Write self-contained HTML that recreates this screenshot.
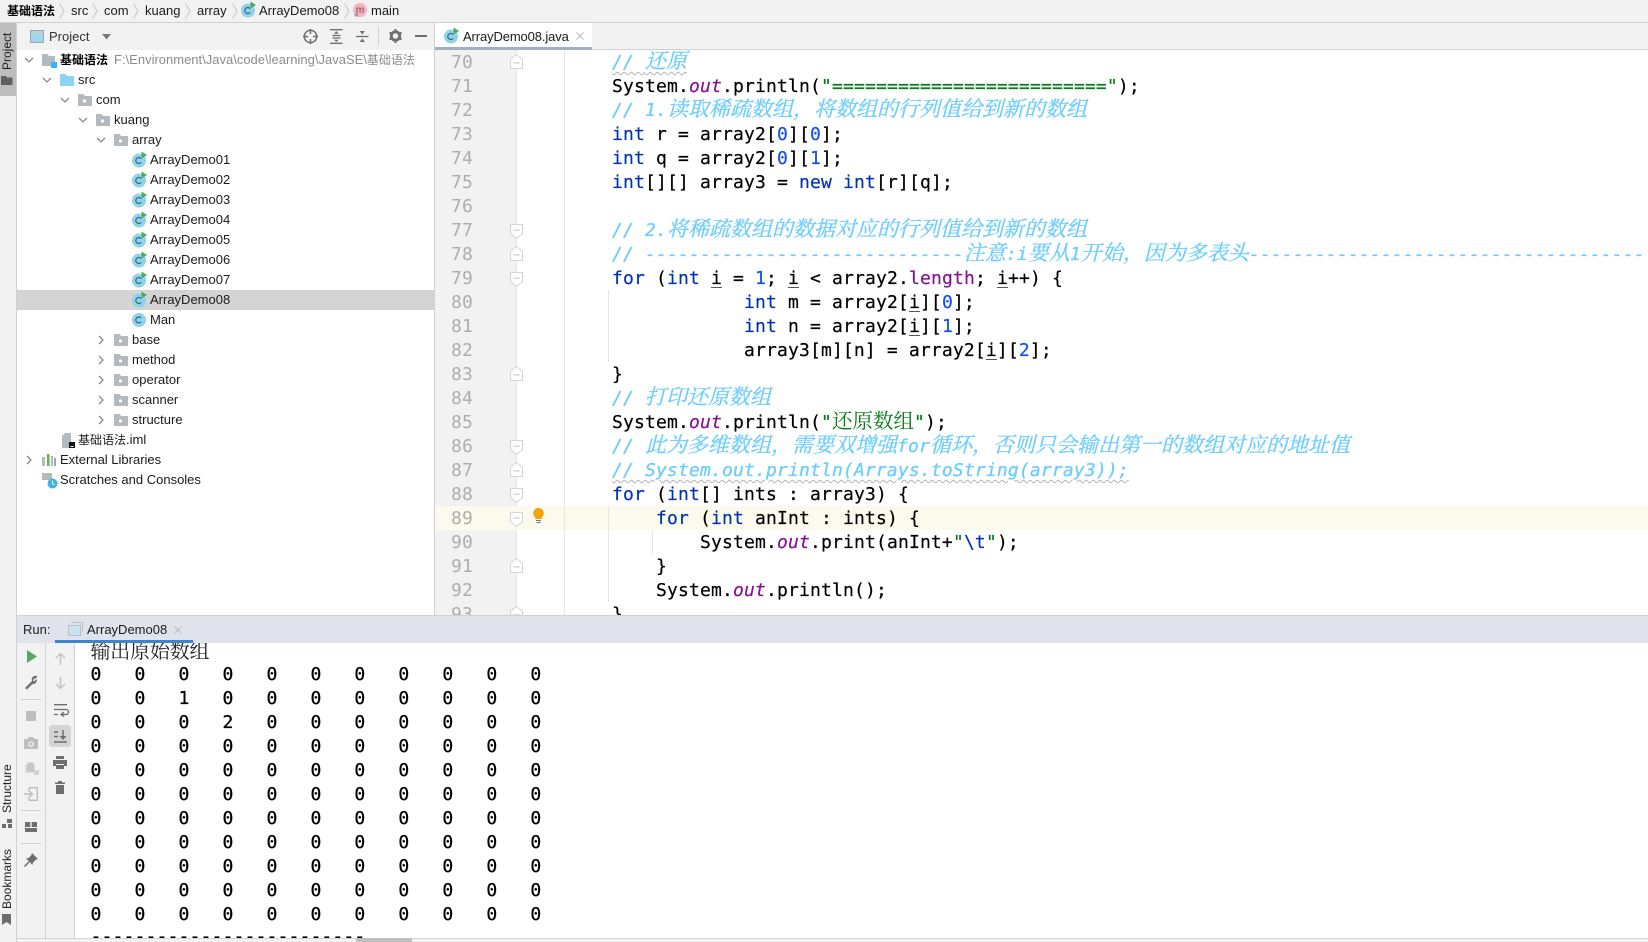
<!DOCTYPE html>
<html><head><meta charset="utf-8"><style>
*{box-sizing:border-box}
html,body{margin:0;padding:0;width:1648px;height:942px;overflow:hidden;background:#fff}
body{position:relative;font-family:"Liberation Sans","Noto Sans CJK SC",sans-serif;font-size:13px;color:#1a1a1a}
.a{position:absolute}
.t{position:absolute;white-space:pre;line-height:20px;height:20px}
.l{position:absolute;left:612px;height:24px;line-height:24px;white-space:pre;font-family:"DejaVu Sans Mono",monospace;font-size:18px;letter-spacing:.16px;color:#000;transform:translateY(1px);-webkit-text-stroke:.2px}
.n{position:absolute;left:449px;width:24px;height:24px;line-height:24px;text-align:right;font-family:"DejaVu Sans Mono",monospace;font-size:18px;letter-spacing:.16px;color:#adadad;transform:translateY(1px)}
.k{color:#0033b3}.d{color:#1750eb}.s{color:#067d17}.f{color:#871094;font-style:italic}.m{color:#871094}
.c{color:#6ccdff;font-style:italic;-webkit-text-stroke:.3px}
.z{font-family:"Noto Serif CJK SC",serif;font-size:21px;letter-spacing:0;line-height:0}
.u{text-decoration:underline;text-decoration-color:#555;text-underline-offset:3px}
.w{text-decoration:underline wavy #b5b5b5 1px;text-underline-offset:3px}
.g{position:absolute;width:1px;background:#e6e6e6}
.o{position:absolute;left:15.5px;height:24px;line-height:24px;white-space:pre;font-family:"DejaVu Sans Mono",monospace;font-size:18px;letter-spacing:.16px;color:#000;transform:translateY(1px);-webkit-text-stroke:.3px}
.v{position:absolute;white-space:pre;transform:rotate(-90deg);transform-origin:0 0;font-size:12px;color:#222;line-height:16px}
svg{position:absolute;overflow:visible}
</style></head><body>
<svg width="0" height="0" style="position:absolute"><defs>
<symbol id="cr" viewBox="0 0 14 14" overflow="visible"><circle cx="7" cy="7.5" r="7" fill="#8fd3ec"/><path d="M9.2 5.7A3 3 0 1 0 9.2 9.3" fill="none" stroke="#39667a" stroke-width="1.2"/><path d="M9.5-1.5L15 2 9.5 5.5z" fill="#4bab4f"/></symbol>
<symbol id="cn" viewBox="0 0 14 14" overflow="visible"><circle cx="7" cy="7" r="7" fill="#8fd3ec"/><path d="M9.2 5.2A3 3 0 1 0 9.2 8.8" fill="none" stroke="#39667a" stroke-width="1.2"/></symbol>
<symbol id="pk" viewBox="0 0 14 12" overflow="visible"><path d="M0 0h5.500l1.500 2h7v10H0z" fill="#b2bac0"/><circle cx="6.500" cy="7" r="1.600" fill="#fff"/></symbol>
<symbol id="dn" viewBox="0 0 10 6" overflow="visible"><path d="M1 1l4 4 4-4" fill="none" stroke="#8b8b8b" stroke-width="1.300"/></symbol>
<symbol id="rt" viewBox="0 0 6 10" overflow="visible"><path d="M1 1l4 4-4 4" fill="none" stroke="#8b8b8b" stroke-width="1.300"/></symbol>
<symbol id="sp" viewBox="0 0 6 16" overflow="visible"><path d="M.5 .5L5 8 .5 15.500" fill="none" stroke="#c4c4c4" stroke-width="1"/></symbol>
<symbol id="fu" viewBox="0 0 14 16" overflow="visible"><path d="M.5 5.500L7 .5l6.500 5v10H.5z" fill="#fff" stroke="#d0d0d0"/><path d="M3.500 9.500h7" stroke="#bdbdbd"/></symbol>
<symbol id="fd" viewBox="0 0 14 16" overflow="visible"><path d="M.5 .5h13v10L7 15.500.5 10.500z" fill="#fff" stroke="#d0d0d0"/><path d="M3.500 6.500h7" stroke="#bdbdbd"/></symbol>
</defs></svg>

<!-- breadcrumb -->
<div class="a" style="left:0;top:0;width:1648px;height:23px;background:#f2f2f2;border-bottom:1px solid #d1d1d1"></div>
<div class="t" style="left:7px;top:1px;font-size:12px;font-weight:bold;color:#000">基础语法</div>
<svg style="left:59px;top:3px" width="6" height="16"><use href="#sp" width="6" height="16"/></svg>
<div class="t" style="left:71px;top:1px">src</div>
<svg style="left:92px;top:3px" width="6" height="16"><use href="#sp" width="6" height="16"/></svg>
<div class="t" style="left:104px;top:1px">com</div>
<svg style="left:133px;top:3px" width="6" height="16"><use href="#sp" width="6" height="16"/></svg>
<div class="t" style="left:145px;top:1px">kuang</div>
<svg style="left:185px;top:3px" width="6" height="16"><use href="#sp" width="6" height="16"/></svg>
<div class="t" style="left:197px;top:1px">array</div>
<svg style="left:232px;top:3px" width="6" height="16"><use href="#sp" width="6" height="16"/></svg>
<svg style="left:241px;top:3px" width="14" height="14"><use href="#cr" width="14" height="14"/></svg>
<div class="t" style="left:259px;top:1px">ArrayDemo08</div>
<svg style="left:344px;top:3px" width="6" height="16"><use href="#sp" width="6" height="16"/></svg>
<svg style="left:353px;top:3px" width="14" height="15"><circle cx="7" cy="7" r="7" fill="#f7b3c2"/><text x="7" y="10" font-size="10" text-anchor="middle" fill="#7a3a4a" font-family="Liberation Sans">m</text><path d="M1 12l3-2.500 2 2-3 2.500z" fill="#9aa0a6"/></svg>
<div class="t" style="left:371px;top:1px">main</div>

<!-- left bar -->
<div class="a" style="left:0;top:23px;width:17px;height:919px;background:#f2f2f2;border-right:1px solid #d1d1d1"></div>
<div class="a" style="left:0;top:23px;width:16px;height:73px;background:#bdbdbd"></div>
<div class="v" style="left:-1px;top:70px">Project</div>
<svg style="left:1px;top:76px" width="12" height="9"><path d="M0 0h5l1 1.500h5.500V9H0z" fill="#5f5f5f"/></svg>
<div class="v" style="left:-1px;top:813px">Structure</div>
<svg style="left:2px;top:819px" width="11" height="9"><path d="M5 0h5v4H5zM0 5h4v4H0zM6 5h4v4H6z" fill="#6e6e6e"/></svg>
<div class="v" style="left:-1px;top:909px">Bookmarks</div>
<svg style="left:2px;top:914px" width="10" height="12"><path d="M0 0h9v11L4.500 8 0 11z" fill="#6e6e6e"/></svg>

<!-- project panel -->
<div class="a" style="left:17px;top:23px;width:418px;height:592px;background:#fff;border-right:1px solid #d1d1d1"></div>
<div class="a" style="left:17px;top:23px;width:417px;height:27px;background:#f2f2f2"></div>
<svg style="left:30px;top:30px" width="14" height="13"><rect x=".5" y=".5" width="13" height="12" fill="#9fd7f0" stroke="#9aa7b0"/><rect x="1" y="1" width="12" height="2.500" fill="#c9ced2"/></svg>
<div class="t" style="left:49px;top:27px;color:#333">Project</div>
<svg style="left:102px;top:34px" width="9" height="6"><path d="M0 0h9L4.500 5.500z" fill="#777"/></svg>
<svg style="left:303px;top:29px" width="15" height="15"><circle cx="7.500" cy="7.500" r="6.200" fill="none" stroke="#6e6e6e" stroke-width="1.500"/><path d="M7.500 0v5M7.500 10v5M0 7.500h5M10 7.500h5" stroke="#6e6e6e" stroke-width="1.500"/></svg>
<svg style="left:330px;top:29px" width="13" height="15"><path d="M0 .7h12.500M0 14.300h12.500M2.500 6.500h8M2.500 9h8" stroke="#6e6e6e" stroke-width="1.300" /><path d="M6.300 2L4 4.800h4.600z" fill="#6e6e6e"/><path d="M6.300 13L4 10.700h4.600z" fill="#6e6e6e"/></svg>
<svg style="left:356px;top:29px" width="13" height="15"><path d="M0 7.500h12.500" stroke="#6e6e6e" stroke-width="1.300"/><path d="M6.300 5.500L3.700 2h5.200zM6.300 9.500L3.700 13h5.200z" fill="#6e6e6e"/></svg>
<div class="a" style="left:378px;top:26px;width:1px;height:20px;background:#d1d1d1"></div>
<svg style="left:389px;top:29px" width="13" height="14"><circle cx="6.500" cy="7" r="4.200" fill="none" stroke="#6e6e6e" stroke-width="2.800"/><path d="M6.500 0v3M6.500 11v3M.5 3.500l2.600 1.500M9.900 9l2.600 1.500M.5 10.500L3.100 9M9.900 5l2.600-1.500" stroke="#6e6e6e" stroke-width="2"/></svg>
<div class="a" style="left:415px;top:35px;width:12px;height:2px;background:#6e6e6e"></div>

<!-- tree -->
<div class="a" style="left:17px;top:290px;width:417px;height:20px;background:#d4d4d4"></div>
<svg style="left:24px;top:57px" width="10" height="6"><use href="#dn" width="10" height="6"/></svg>
<svg style="left:42px;top:54px" width="15" height="14"><path d="M0 0h5.500l1.500 2h6v10H0z" fill="#b2bac0"/><rect x="9" y="8" width="6" height="6" fill="#3fb3e3"/></svg>
<div class="t" style="left:60px;top:50px;font-size:12px;font-weight:bold;color:#000">基础语法</div>
<div class="t" style="left:114px;top:50px;color:#8c8c8c">F:\Environment\Java\code\learning\JavaSE\<span style="font-size:12px">基础语法</span></div>
<svg style="left:42px;top:77px" width="10" height="6"><use href="#dn" width="10" height="6"/></svg>
<svg style="left:60px;top:74px" width="14" height="12"><path d="M0 0h5.500l1.500 2h7v10H0z" fill="#8cd3ef"/></svg>
<div class="t" style="left:78px;top:70px">src</div>
<svg style="left:60px;top:97px" width="10" height="6"><use href="#dn" width="10" height="6"/></svg>
<svg style="left:78px;top:94px" width="14" height="12"><use href="#pk" width="14" height="12"/></svg>
<div class="t" style="left:96px;top:90px">com</div>
<svg style="left:78px;top:117px" width="10" height="6"><use href="#dn" width="10" height="6"/></svg>
<svg style="left:96px;top:114px" width="14" height="12"><use href="#pk" width="14" height="12"/></svg>
<div class="t" style="left:114px;top:110px">kuang</div>
<svg style="left:96px;top:137px" width="10" height="6"><use href="#dn" width="10" height="6"/></svg>
<svg style="left:114px;top:134px" width="14" height="12"><use href="#pk" width="14" height="12"/></svg>
<div class="t" style="left:132px;top:130px">array</div>
<svg style="left:132px;top:153px" width="14" height="14"><use href="#cr" width="14" height="14"/></svg><div class="t" style="left:150px;top:150px">ArrayDemo01</div>
<svg style="left:132px;top:173px" width="14" height="14"><use href="#cr" width="14" height="14"/></svg><div class="t" style="left:150px;top:170px">ArrayDemo02</div>
<svg style="left:132px;top:193px" width="14" height="14"><use href="#cr" width="14" height="14"/></svg><div class="t" style="left:150px;top:190px">ArrayDemo03</div>
<svg style="left:132px;top:213px" width="14" height="14"><use href="#cr" width="14" height="14"/></svg><div class="t" style="left:150px;top:210px">ArrayDemo04</div>
<svg style="left:132px;top:233px" width="14" height="14"><use href="#cr" width="14" height="14"/></svg><div class="t" style="left:150px;top:230px">ArrayDemo05</div>
<svg style="left:132px;top:253px" width="14" height="14"><use href="#cr" width="14" height="14"/></svg><div class="t" style="left:150px;top:250px">ArrayDemo06</div>
<svg style="left:132px;top:273px" width="14" height="14"><use href="#cr" width="14" height="14"/></svg><div class="t" style="left:150px;top:270px">ArrayDemo07</div>
<svg style="left:132px;top:293px" width="14" height="14"><use href="#cr" width="14" height="14"/></svg><div class="t" style="left:150px;top:290px">ArrayDemo08</div>
<svg style="left:132px;top:313px" width="14" height="14"><use href="#cn" width="14" height="14"/></svg><div class="t" style="left:150px;top:310px">Man</div>
<svg style="left:98px;top:335px" width="6" height="10"><use href="#rt" width="6" height="10"/></svg><svg style="left:114px;top:334px" width="14" height="12"><use href="#pk" width="14" height="12"/></svg><div class="t" style="left:132px;top:330px">base</div>
<svg style="left:98px;top:355px" width="6" height="10"><use href="#rt" width="6" height="10"/></svg><svg style="left:114px;top:354px" width="14" height="12"><use href="#pk" width="14" height="12"/></svg><div class="t" style="left:132px;top:350px">method</div>
<svg style="left:98px;top:375px" width="6" height="10"><use href="#rt" width="6" height="10"/></svg><svg style="left:114px;top:374px" width="14" height="12"><use href="#pk" width="14" height="12"/></svg><div class="t" style="left:132px;top:370px">operator</div>
<svg style="left:98px;top:395px" width="6" height="10"><use href="#rt" width="6" height="10"/></svg><svg style="left:114px;top:394px" width="14" height="12"><use href="#pk" width="14" height="12"/></svg><div class="t" style="left:132px;top:390px">scanner</div>
<svg style="left:98px;top:415px" width="6" height="10"><use href="#rt" width="6" height="10"/></svg><svg style="left:114px;top:414px" width="14" height="12"><use href="#pk" width="14" height="12"/></svg><div class="t" style="left:132px;top:410px">structure</div>
<svg style="left:62px;top:433px" width="13" height="15"><path d="M3 0h6v15H0V3z" fill="#b2bac0"/><rect x="7" y="9" width="6" height="6" fill="#111"/><rect x="8.500" y="13" width="3" height="1" fill="#fff"/></svg>
<div class="t" style="left:78px;top:430px"><span style="font-size:12px">基础语法</span>.iml</div>
<svg style="left:26px;top:455px" width="6" height="10"><use href="#rt" width="6" height="10"/></svg>
<svg style="left:42px;top:454px" width="14" height="12"><path d="M0 3h3v9H0z" fill="#b2bac0"/><path d="M5 0h2.500v12H5z" fill="#62b543"/><path d="M9 2h2v10H9z" fill="#b2bac0"/><path d="M12 4h2v8h-2z" fill="#9aa7b0"/></svg>
<div class="t" style="left:60px;top:450px">External Libraries</div>
<svg style="left:42px;top:473px" width="16" height="16"><path d="M0 0h10v7H0z" fill="#b2bac0"/><circle cx="10.500" cy="10.500" r="5" fill="#3fb3e3"/><path d="M10.500 7.500v3.200l2 1" fill="none" stroke="#fff"/></svg>
<div class="t" style="left:60px;top:470px">Scratches and Consoles</div>

<!-- editor tab bar -->
<div class="a" style="left:435px;top:23px;width:1213px;height:27px;background:#f2f2f2;border-bottom:1px solid #d1d1d1"></div>
<div class="a" style="left:435px;top:23px;width:157px;height:24px;background:#fff"></div>
<div class="a" style="left:435px;top:47px;width:157px;height:3px;background:#a3afbd"></div>
<svg style="left:444px;top:29px" width="14" height="14"><use href="#cr" width="14" height="14"/></svg>
<div class="t" style="left:463px;top:27px;letter-spacing:-.12px">ArrayDemo08.java</div>
<svg style="left:576px;top:32px" width="8" height="8"><path d="M.5 .5l7 7M7.500 .5l-7 7" stroke="#bcbcbc"/></svg>

<!-- editor -->
<div class="a" style="left:435px;top:50px;width:81px;height:565px;background:#f2f2f2"></div>
<div class="a" style="left:516px;top:50px;width:1px;height:565px;background:#e6e6e6"></div>
<div class="a" style="left:435px;top:506px;width:1213px;height:24px;background:#fcfaed"></div>
<div class="a" style="left:564px;top:50px;width:1px;height:565px;background:#e8e8e8"></div>
<div class="g" style="left:608px;top:290px;height:72px"></div>
<div class="g" style="left:608px;top:506px;height:96px"></div>
<div class="g" style="left:652px;top:530px;height:24px"></div>

<div class="n" style="top:50px">70</div><div class="n" style="top:74px">71</div><div class="n" style="top:98px">72</div><div class="n" style="top:122px">73</div><div class="n" style="top:146px">74</div><div class="n" style="top:170px">75</div><div class="n" style="top:194px">76</div><div class="n" style="top:218px">77</div><div class="n" style="top:242px">78</div><div class="n" style="top:266px">79</div><div class="n" style="top:290px">80</div><div class="n" style="top:314px">81</div><div class="n" style="top:338px">82</div><div class="n" style="top:362px">83</div><div class="n" style="top:386px">84</div><div class="n" style="top:410px">85</div><div class="n" style="top:434px">86</div><div class="n" style="top:458px">87</div><div class="n" style="top:482px">88</div><div class="n" style="top:506px">89</div><div class="n" style="top:530px">90</div><div class="n" style="top:554px">91</div><div class="n" style="top:578px">92</div><div class="n" style="top:602px">93</div>

<svg style="left:510px;top:54px" width="13" height="15"><use href="#fu" width="13" height="15"/></svg>
<svg style="left:510px;top:224px" width="13" height="15"><use href="#fd" width="13" height="15"/></svg>
<svg style="left:510px;top:246px" width="13" height="15"><use href="#fu" width="13" height="15"/></svg>
<svg style="left:510px;top:272px" width="13" height="15"><use href="#fd" width="13" height="15"/></svg>
<svg style="left:510px;top:366px" width="13" height="15"><use href="#fu" width="13" height="15"/></svg>
<svg style="left:510px;top:440px" width="13" height="15"><use href="#fd" width="13" height="15"/></svg>
<svg style="left:510px;top:462px" width="13" height="15"><use href="#fu" width="13" height="15"/></svg>
<svg style="left:510px;top:488px" width="13" height="15"><use href="#fd" width="13" height="15"/></svg>
<svg style="left:510px;top:512px" width="13" height="15"><use href="#fd" width="13" height="15"/></svg>
<svg style="left:510px;top:558px" width="13" height="15"><use href="#fu" width="13" height="15"/></svg>
<svg style="left:510px;top:606px" width="13" height="15"><use href="#fu" width="13" height="15"/></svg>
<svg style="left:533px;top:508px" width="11" height="15"><path d="M5.500 0a5.200 5.200 0 0 1 3.200 9.300V11H2.300V9.300A5.200 5.200 0 0 1 5.500 0z" fill="#f0a30a"/><path d="M3 12.500h5M3.500 14.500h4" stroke="#777"/></svg>

<div class="l c" style="top:50px"><span class="w">// <span class="z">还原</span></span></div>
<div class="l" style="top:74px">System.<span class="f">out</span>.println(<span class="s">"=========================</span><span class="s">"</span>);</div>
<div class="l c" style="top:98px">// 1.<span class="z">读取稀疏数组，将数组的行列值给到新的数组</span></div>
<div class="l" style="top:122px"><span class="k">int</span> r = array2[<span class="d">0</span>][<span class="d">0</span>];</div>
<div class="l" style="top:146px"><span class="k">int</span> q = array2[<span class="d">0</span>][<span class="d">1</span>];</div>
<div class="l" style="top:170px"><span class="k">int</span>[][] array3 = <span class="k">new</span> <span class="k">int</span>[r][q];</div>
<div class="l c" style="top:218px">// 2.<span class="z">将稀疏数组的数据对应的行列值给到新的数组</span></div>
<div class="l c" style="top:242px">// -----------------------------<span class="z">注意</span>:i<span class="z">要从</span>1<span class="z">开始，因为多表头</span>------------------------------------</div>
<div class="l" style="top:266px"><span class="k">for</span> (<span class="k">int</span> <span class="u">i</span> = <span class="d">1</span>; <span class="u">i</span> &lt; array2.<span class="m">length</span>; <span class="u">i</span>++) {</div>
<div class="l" style="top:290px">            <span class="k">int</span> m = array2[<span class="u">i</span>][<span class="d">0</span>];</div>
<div class="l" style="top:314px">            <span class="k">int</span> n = array2[<span class="u">i</span>][<span class="d">1</span>];</div>
<div class="l" style="top:338px">            array3[m][n] = array2[<span class="u">i</span>][<span class="d">2</span>];</div>
<div class="l" style="top:362px">}</div>
<div class="l c" style="top:386px">// <span class="z">打印还原数组</span></div>
<div class="l" style="top:410px">System.<span class="f">out</span>.println(<span class="s">"<span class="z" style="font-size:20.5px;-webkit-text-stroke:0">还原数组</span>"</span>);</div>
<div class="l c" style="top:434px">// <span class="z">此为多维数组，需要双增强</span>for<span class="z">循环，否则只会输出第一的数组对应的地址值</span></div>
<div class="l c" style="top:458px"><span class="w">// System.out.println(Arrays.toString(array3));</span></div>
<div class="l" style="top:482px"><span class="k">for</span> (<span class="k">int</span>[] ints : array3) {</div>
<div class="l" style="top:506px">    <span class="k">for</span> (<span class="k">int</span> anInt : ints) {</div>
<div class="l" style="top:530px">        System.<span class="f">out</span>.print(anInt+<span class="s">"</span><span class="k">\t</span><span class="s">"</span>);</div>
<div class="l" style="top:554px">    }</div>
<div class="l" style="top:578px">    System.<span class="f">out</span>.println();</div>
<div class="l" style="top:602px">}</div>

<!-- run panel -->
<div class="a" style="left:17px;top:615px;width:1631px;height:28px;background:#e0e3eb;border-top:1px solid #d1d1d1"></div>
<div class="t" style="left:23px;top:620px;color:#222">Run:</div>
<svg style="left:68px;top:622px" width="15" height="14"><path d="M3.500 .5h11v10" fill="none" stroke="#b9c0c7"/><rect x=".5" y="3.500" width="12" height="10" fill="#c5e4f2" stroke="#b9c0c7"/></svg>
<div class="t" style="left:87px;top:620px">ArrayDemo08</div>
<svg style="left:174px;top:626px" width="8" height="8"><path d="M.5 .5l7 7M7.500 .5l-7 7" stroke="#bcbcbc"/></svg>

<div class="a" style="left:17px;top:643px;width:58px;height:295px;background:#f2f2f2;border-right:1px solid #d1d1d1"></div>
<div class="a" style="left:45px;top:643px;width:1px;height:295px;background:#d1d1d1"></div>
<svg style="left:27px;top:650px" width="10" height="13"><path d="M0 0l10 6.500L0 13z" fill="#59a869"/></svg>
<svg style="left:24px;top:675px" width="14" height="14"><path d="M1 13l7-7a3.700 3.700 0 0 1 5.500-4.500L11 4 10 3.500 9 5.500l1 1 2.500-2.500a3.700 3.700 0 0 1-4 5l-5.500 5.500z" fill="#6e6e6e"/></svg>
<div class="a" style="left:21px;top:699px;width:20px;height:1px;background:#d1d1d1"></div>
<div class="a" style="left:26px;top:711px;width:10px;height:10px;background:#bdbdbd"></div>
<svg style="left:24px;top:737px" width="14" height="12"><path d="M0 2h3.500l1-2h5l1 2H14v10H0z" fill="#bdbdbd"/><circle cx="7" cy="7" r="2.800" fill="#f2f2f2"/><circle cx="7" cy="7" r="1.500" fill="#bdbdbd"/></svg>
<svg style="left:25px;top:761px" width="14" height="14"><path d="M3 2h5v1l1 1v7H2V4l1-1zM0 5h2M0 8h2M0 11h2" fill="#c9c9c9" stroke="#c9c9c9"/><path d="M8 8l5 5M13 9v4H9" fill="none" stroke="#c9c9c9" stroke-width="1.500"/></svg>
<svg style="left:24px;top:787px" width="14" height="14"><path d="M5 .7h8.300v12.600H5M5 4V.7M5 13.300V10" fill="none" stroke="#bdbdbd" stroke-width="1.400"/><path d="M0 7h7M5 4l3.500 3L5 10" fill="none" stroke="#bdbdbd" stroke-width="1.400"/></svg>
<div class="a" style="left:21px;top:810px;width:20px;height:1px;background:#d1d1d1"></div>
<svg style="left:25px;top:822px" width="12" height="10"><path d="M0 0h5.300v5H0zM6.700 0H12v5H6.700zM0 6h12v4H0z" fill="#6e6e6e"/></svg>
<div class="a" style="left:21px;top:843px;width:20px;height:1px;background:#d1d1d1"></div>
<svg style="left:24px;top:853px" width="14" height="14"><path d="M8 0l6 6-2 .5L9 9.500 8.500 12 2 5.500 4.500 5l3-3z" fill="#6e6e6e"/><path d="M5 9L.5 13.500" stroke="#6e6e6e" stroke-width="1.500"/></svg>

<svg style="left:55px;top:652px" width="11" height="13"><path d="M5.500 13V1.500M1 6l4.500-4.500L10 6" fill="none" stroke="#c4c4c4" stroke-width="1.500"/></svg>
<svg style="left:55px;top:677px" width="11" height="13"><path d="M5.500 0v11.500M1 7l4.500 4.500L10 7" fill="none" stroke="#c4c4c4" stroke-width="1.500"/></svg>
<svg style="left:54px;top:704px" width="14" height="12"><path d="M0 .7h13M0 5.500h12a2.300 2.300 0 0 1 0 5H7.500M10 8l-3 2.500 3 2M0 10.500h4" fill="none" stroke="#6e6e6e" stroke-width="1.300"/></svg>
<div class="a" style="left:49px;top:725px;width:22px;height:22px;background:#d4d4d4;border-radius:3px"></div>
<svg style="left:54px;top:730px" width="13" height="13"><path d="M0 2h4M0 6.500h4M0 12h13M9 0v7.500" fill="none" stroke="#6e6e6e" stroke-width="1.500"/><path d="M5.500 6h7L9 10z" fill="#6e6e6e"/></svg>
<svg style="left:53px;top:756px" width="14" height="13"><path d="M3 0h8v3H3zM0 4h14v6h-3V8H3v2H0zM3 9h8v4H3z" fill="#6e6e6e"/></svg>
<svg style="left:55px;top:781px" width="10" height="13"><path d="M3 0h4v1.500h3V3H0V1.500h3zM1 4h8v9H1z" fill="#6e6e6e"/></svg>

<!-- console -->
<div class="a" style="left:75px;top:643px;width:1573px;height:295px;background:#fff;overflow:hidden">
<div class="o" style="top:-6px;font-family:'Noto Serif CJK SC',serif;font-size:20px;letter-spacing:-.2px;color:#222;-webkit-text-stroke:0">输出原始数组</div>
<div class="o" style="top:19px">0   0   0   0   0   0   0   0   0   0   0</div>
<div class="o" style="top:43px">0   0   1   0   0   0   0   0   0   0   0</div>
<div class="o" style="top:67px">0   0   0   2   0   0   0   0   0   0   0</div>
<div class="o" style="top:91px">0   0   0   0   0   0   0   0   0   0   0</div>
<div class="o" style="top:115px">0   0   0   0   0   0   0   0   0   0   0</div>
<div class="o" style="top:139px">0   0   0   0   0   0   0   0   0   0   0</div>
<div class="o" style="top:163px">0   0   0   0   0   0   0   0   0   0   0</div>
<div class="o" style="top:187px">0   0   0   0   0   0   0   0   0   0   0</div>
<div class="o" style="top:211px">0   0   0   0   0   0   0   0   0   0   0</div>
<div class="o" style="top:235px">0   0   0   0   0   0   0   0   0   0   0</div>
<div class="o" style="top:259px">0   0   0   0   0   0   0   0   0   0   0</div>
<div class="o" style="top:281px">-------------------------</div>
</div>
<div class="a" style="left:55px;top:640px;width:138px;height:3px;background:#4083c9"></div>
<div class="a" style="left:17px;top:938px;width:1631px;height:4px;background:#f2f2f2;border-top:1px solid #d6d6d6"></div>
<div class="a" style="left:356px;top:938px;width:56px;height:4px;background:#bfbfbf"></div>
</body></html>
